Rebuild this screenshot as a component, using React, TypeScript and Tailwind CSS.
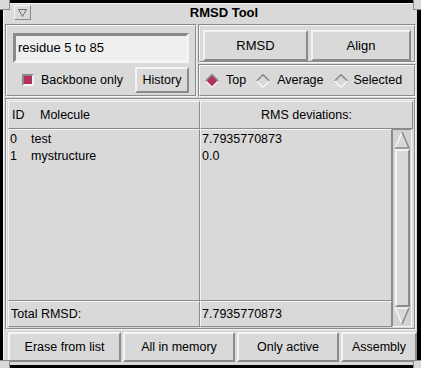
import React from 'react'

const raised = 'border-t-[#f4f4f4] border-l-[#f4f4f4] border-b-[#8a8a8a] border-r-[#8a8a8a]'
const sunken = 'border-t-[#8a8a8a] border-l-[#8a8a8a] border-b-[#f4f4f4] border-r-[#f4f4f4]'

function Groove({ className = '', inner = '', children }: { className?: string; inner?: string; children?: React.ReactNode }) {
  return (
    <div className={`border ${sunken} ${className}`}>
      <div className={`h-full w-full border ${raised} ${inner}`}>{children}</div>
    </div>
  )
}

function Button({ label, className = '' }: { label: string; className?: string }) {
  return (
    <div className={`flex items-center justify-center border-2 ${raised} bg-[#d9d9d9] ${className}`}>
      {label}
    </div>
  )
}

function Diamond({ on }: { on?: boolean }) {
  return (
    <svg width="14" height="14" viewBox="0 0 14 14" className="shrink-0">
      <polygon points="7,0 14,7 7,14 0,7" fill={on ? '#b03060' : '#d9d9d9'} />
      <polyline points="0.7,7 7,0.7 13.3,7" fill="none" stroke="#8a8a8a" strokeWidth="1.6" />
      <polyline points="0.7,7 7,13.3 13.3,7" fill="none" stroke="#f4f4f4" strokeWidth="1.6" />
    </svg>
  )
}

function Arrow({ up }: { up?: boolean }) {
  return (
    <svg width="16" height="18" viewBox="0 0 16 18" className="shrink-0">
      {up ? (
        <>
          <polygon points="8,1 15,17 1,17" fill="#d9d9d9" />
          <polyline points="1,17 8,1" stroke="#f4f4f4" strokeWidth="1.5" fill="none" />
          <polyline points="8,1 15,17 1,17" stroke="#8a8a8a" strokeWidth="1.5" fill="none" />
        </>
      ) : (
        <>
          <polygon points="1,1 15,1 8,17" fill="#d9d9d9" />
          <polyline points="8,17 1,1 15,1" stroke="#f4f4f4" strokeWidth="1.5" fill="none" />
          <polyline points="15,1 8,17" stroke="#8a8a8a" strokeWidth="1.5" fill="none" />
        </>
      )}
    </svg>
  )
}

const ROWS = [
  { id: '0', name: 'test', rms: '7.7935770873' },
  { id: '1', name: 'mystructure', rms: '0.0' },
]

export default function App() {
  return (
    <div className="relative h-[368px] w-[421px] bg-black pb-[3px] pl-[3px] pr-[4px] pt-[3px] font-['Liberation_Sans',Arial,sans-serif] text-[12.5px] text-black">
      <div className="flex h-full flex-col border-l border-t border-[#f4f4f4] bg-[#d9d9d9]">
        {/* title bar */}
        <div className="flex h-[20px] items-start">
          <div className={`ml-[10px] mt-[1px] flex h-[15px] w-[17px] items-center justify-center border ${raised}`}>
            <svg width="9" height="8" viewBox="0 0 9 8">
              <polygon points="0.5,0.5 8.5,0.5 4.5,7.5" fill="none" stroke="#6a6a6a" strokeWidth="1" />
            </svg>
          </div>
          <div className="flex-1 pt-[1px] text-center text-[13px] font-bold leading-[16px]">RMSD Tool</div>
        </div>

        {/* top area */}
        <div className="ml-[1px] flex h-[73px] gap-[1px]">
          <Groove className="w-[192px]" inner="flex flex-col px-[6px] pb-[2px] pt-[7px]">
            <div className={`h-[30px] border-[3px] ${sunken} bg-[#efefef] pl-[2px] text-[13px] leading-[24px]`}>
              residue 5 to 85
            </div>
            <div className="mt-[4px] flex flex-1 items-center">
              <div className={`ml-[9px] h-[12px] w-[12px] border-2 ${sunken} bg-[#b03060]`} />
              <span className="ml-[7px]">Backbone only</span>
              <Button label="History" className="ml-auto h-[26px] w-[54px]" />
            </div>
          </Groove>
          <div className="flex w-[218px] flex-col gap-[1px]">
            <Groove className="h-[39px]" inner="flex gap-[3px] px-[3px] pt-[4px] pb-[1px]">
              <Button label="RMSD" className="h-[31px] w-[106px] text-[13px]" />
              <Button label="Align" className="h-[31px] w-[101px] text-[13px]" />
            </Groove>
            <Groove className="h-[33px]" inner="flex items-center pl-[5px]">
              <Diamond on />
              <span className="ml-[7px]">Top</span>
              <span className="ml-[10px]"><Diamond /></span>
              <span className="ml-[7px]">Average</span>
              <span className="ml-[10px]"><Diamond /></span>
              <span className="ml-[6px]">Selected</span>
            </Groove>
          </div>
        </div>

        {/* list */}
        <Groove className="ml-[1px] mt-[1px] h-[232px] w-[411px]" inner="flex flex-col p-[1px]">
          <div className="flex h-[28px]">
            <div className={`flex w-[192px] items-center border ${raised} pl-[3px]`}>
              <span className="w-[28px]">ID</span>
              <span>Molecule</span>
            </div>
            <div className={`flex flex-1 items-center justify-center border ${raised}`}>RMS deviations:</div>
          </div>
          <div className="flex flex-1">
            <div className="flex w-[384px] flex-col">
              <div className="flex flex-1">
                <div className={`w-[192px] border ${raised} pt-[1px] leading-[17px]`}>
                  {ROWS.map((r) => (
                    <div key={r.id} className="flex pl-[1px]">
                      <span className="w-[21px]">{r.id}</span>
                      <span>{r.name}</span>
                    </div>
                  ))}
                </div>
                <div className={`flex-1 border ${raised} pl-[1px] pt-[1px] leading-[17px]`}>
                  {ROWS.map((r) => (
                    <div key={r.id}>{r.rms}</div>
                  ))}
                </div>
              </div>
              <div className="flex h-[26px]">
                <div className={`flex w-[192px] items-center border ${raised} pl-[2px]`}>Total RMSD:</div>
                <div className={`flex flex-1 items-center border ${raised} pl-[1px]`}>7.7935770873</div>
              </div>
            </div>
            <div className={`flex w-[20px] flex-col items-center border ${sunken} bg-[#d2d2d2] py-[1px]`}>
              <Arrow up />
              <div className={`w-[15px] flex-1 border-2 ${raised} bg-[#d9d9d9]`} />
              <Arrow />
            </div>
          </div>
        </Groove>

        {/* buttons */}
        <div className="ml-[4px] mt-[2px] flex h-[30px] gap-[2px]">
          <Button label="Erase from list" className="w-[113px]" />
          <Button label="All in memory" className="w-[112px]" />
          <Button label="Only active" className="w-[102px]" />
          <Button label="Assembly" className="w-[76px]" />
        </div>
      </div>

      {/* window corner handles */}
      <div className="absolute left-0 top-0 h-[10px] w-[10px] border-b border-r border-[#8a8a8a] bg-[#d9d9d9]" />
      <div className="absolute right-0 top-0 h-[10px] w-[8px] border-b border-l border-[#8a8a8a] bg-[#d9d9d9]" />
      <div className="absolute bottom-0 left-0 h-[8px] w-[10px] border-r border-t border-[#8a8a8a] bg-[#d9d9d9]" />
      <div className="absolute bottom-0 right-0 h-[8px] w-[8px] border-l border-t border-[#8a8a8a] bg-[#d9d9d9]" />
    </div>
  )
}
